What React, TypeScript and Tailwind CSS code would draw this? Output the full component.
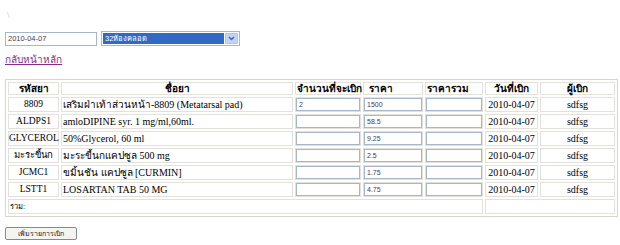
import React from 'react';

const rows = [
  { code: '8809', name: 'เสริมฝ่าเท้าส่วนหน้า-8809 (Metatarsal pad)', qty: '2', price: '1500' },
  { code: 'ALDPS1', name: 'amloDIPINE syr. 1 mg/ml,60ml.', qty: '', price: '58.5' },
  { code: 'GLYCEROL', name: '50%Glycerol, 60 ml', qty: '', price: '9.25' },
  { code: 'มะระขี้นก', name: 'มะระขี้นกแคปซูล 500 mg', qty: '', price: '2.5' },
  { code: 'JCMC1', name: 'ขมิ้นชัน แคปซูล [CURMIN]', qty: '', price: '1.75' },
  { code: 'LSTT1', name: 'LOSARTAN TAB 50 MG', qty: '', price: '4.75' },
];

const serif = 'font-[Liberation_Serif,serif]';
const sans = 'font-[Liberation_Sans,sans-serif]';
const bold = 'font-[DejaVu_Sans,sans-serif]';

const cell = 'border border-[#e3e1da] p-0 whitespace-nowrap';
const field =
  'block w-full h-[13px] border border-[#a7b6c9] bg-white px-[2px] text-[7px] leading-[11px] text-[#4a3a55] outline-none';

const App = () => {
  return (
    <div className={`w-[620px] h-[245px] bg-white text-black text-[10px] ${serif}`}>
      <div className="pl-[7px] pt-[9px] h-[31px] text-[9px] leading-[12px] text-[#bbb]">\</div>

      <div className="flex items-center gap-[4px] pl-[5px] h-[15px]">
        <input
          readOnly
          value="2010-04-07"
          className={`w-[92px] h-[14px] border border-[#a7b6c9] px-[2px] text-[7.5px] leading-[12px] text-[#4a3a55] outline-none ${sans}`}
        />
        <div className="flex w-[139px] h-[15px] border border-[#a7b6c9] bg-white p-[1px]">
          <div className={`flex-1 bg-[#316ac5] text-white text-[7.5px] leading-[11px] px-[2px] ${sans}`}>
            32ห้องคลอด
          </div>
          <div className="w-[13px] ml-[1px] flex items-center justify-center bg-[#c1d3fb] border border-[#b1c4ef] rounded-[1px]">
            <svg width="7" height="5" viewBox="0 0 7 5">
              <path d="M1 1 L3.5 3.5 L6 1" stroke="#4d6185" strokeWidth="1.4" fill="none" />
            </svg>
          </div>
        </div>
      </div>

      <div className="pl-[5px] pt-[8px] h-[33px] leading-[12px]">
        <a href="#" className={`text-[#8a2a8a] underline text-[10px] ${sans}`}>
          กลับหน้าหลัก
        </a>
      </div>

      <table className="ml-[5px] w-[613px] table-fixed border border-[#d8d5cc] border-separate border-spacing-[2px]">
        <thead>
          <tr className={`font-bold text-[10px] ${bold}`}>
            <th className={`${cell} w-[51px] h-[13px] leading-[11px]`}>รหัสยา</th>
            <th className={`${cell} w-[232px] leading-[11px]`}>ชื่อยา</th>
            <th className={`${cell} w-[66px] text-left pl-[1px] leading-[11px]`}>จำนวนที่จะเบิก</th>
            <th className={`${cell} w-[60px] text-left pl-[5px] leading-[11px]`}>ราคา</th>
            <th className={`${cell} w-[58px] text-left pl-[1px] leading-[11px]`}>ราคารวม</th>
            <th className={`${cell} w-[53px] leading-[11px]`}>วันที่เบิก</th>
            <th className={`${cell} leading-[11px]`}>ผู้เบิก</th>
          </tr>
        </thead>
        <tbody>
          {rows.map((value, idx) => (
            <tr key={idx}>
              <td className={`${cell} h-[15px] text-center text-[9.5px] leading-[13px]`}>{value.code}</td>
              <td className={`${cell} pl-[1px] leading-[13px] overflow-hidden`}>{value.name}</td>
              <td className={cell}>
                <input readOnly value={value.qty} className={`${field} ${sans}`} />
              </td>
              <td className={cell}>
                <input readOnly value={value.price} className={`${field} ${sans}`} />
              </td>
              <td className={cell}>
                <input readOnly value="" className={`${field} ${sans}`} />
              </td>
              <td className={`${cell} text-center leading-[13px]`}>2010-04-07</td>
              <td className={`${cell} text-center leading-[13px]`}>sdfsg</td>
            </tr>
          ))}
          <tr>
            <td colSpan={5} className={`${cell} h-[15px] pl-[1px] text-[7.5px] leading-[13px] ${sans}`}>
              รวม:
            </td>
            <td colSpan={2} className={cell}></td>
          </tr>
        </tbody>
      </table>

      <div className="pl-[5px] pt-[10px]">
        <button
          className={`block w-[72px] h-[13px] border border-[#7b8ba1] rounded-[2px] bg-[#f4f4f0] text-[7px] leading-[11px] text-[#222] ${sans}`}
        >
          เพิ่มรายการเบิก
        </button>
      </div>
    </div>
  );
};

export default App;
